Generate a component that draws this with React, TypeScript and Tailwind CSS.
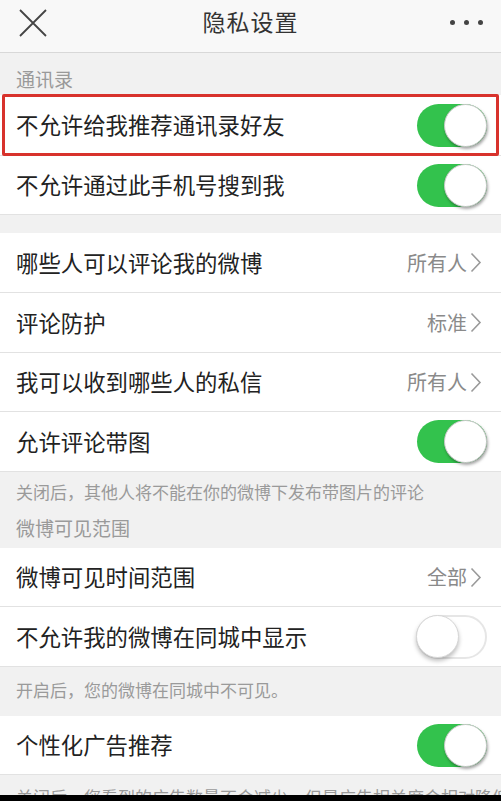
import React from "react";

const font = { fontFamily: '"Noto Sans CJK SC", "Noto Sans", sans-serif' };

const Toggle = ({ on }: { on: boolean }) => {
  return (
    <div
      className={
        on
          ? "w-[70px] h-[43px] rounded-full bg-[#33c24d] flex items-center justify-end"
          : "w-[71px] h-[44px] rounded-full bg-white border-2 border-[#e6e6e6] flex items-center justify-start"
      }
    >
      <div
        className={
          on
            ? "w-[43px] h-[43px] rounded-full bg-white border border-[#c9c9c9] shadow-[1px_2px_3px_rgba(0,0,0,0.35)]"
            : "w-[43px] h-[43px] -ml-[2px] rounded-full bg-white border border-[#d6d6d6] shadow-[0_3px_4px_rgba(0,0,0,0.25)]"
        }
      />
    </div>
  );
};

const Chevron = () => (
  <svg width="12" height="21" viewBox="0 0 12 21" className="ml-[3px]">
    <path d="M1.5 1.5 L10 10.5 L1.5 19.5" fill="none" stroke="#9a9a9a" strokeWidth="1.6" />
  </svg>
);

const ToggleRow = ({ label, on, h = "h-[60px]" }: { label: string; on: boolean; h?: string }) => (
  <div className={`${h} flex items-center justify-between pl-4 pr-[14px] bg-white border-b border-[#e2e2e2]`}>
    <span className="text-[22.4px] text-[#222]">{label}</span>
    <Toggle on={on} />
  </div>
);

const LinkRow = ({ label, value, h = "h-[60px]" }: { label: string; value: string; h?: string }) => (
  <div className={`${h} flex items-center justify-between pl-4 pr-[19px] bg-white border-b border-[#e2e2e2]`}>
    <span className="text-[22.4px] text-[#222]">{label}</span>
    <div className="flex items-center">
      <span className="text-[20px] text-[#8a8a8a]">{value}</span>
      <Chevron />
    </div>
  </div>
);

const App = () => {
  return (
    <div className="w-[501px] h-[801px] overflow-hidden bg-[#f1f1f1]" style={font}>
      {/* Header */}
      <div className="h-[53px] grid grid-cols-[1fr_auto_1fr] items-center pb-[9px] bg-[#f8f8f8] border-b border-[#d8d8d8]">
        <div className="pl-[19px] pt-[2px]">
          <svg width="28" height="28" viewBox="0 0 28 28" className="block">
            <path d="M1 1 L27 27 M27 1 L1 27" stroke="#444" strokeWidth="1.8" fill="none" />
          </svg>
        </div>
        <h1 className="text-[23px] text-[#333] tracking-[1px]">隐私设置</h1>
        <div className="flex justify-end gap-[9px] pr-[18px] pt-[2px]">
          <span className="w-[5px] h-[5px] rounded-full bg-[#444]" />
          <span className="w-[5px] h-[5px] rounded-full bg-[#444]" />
          <span className="w-[5px] h-[5px] rounded-full bg-[#444]" />
        </div>
      </div>

      {/* Contacts */}
      <div className="h-[42px] flex items-center pl-4 pt-[10px] text-[19px] text-[#999]">通讯录</div>
      <div className="relative">
        <ToggleRow label="不允许给我推荐通讯录好友" on h="h-[61px]" />
        <div className="absolute left-[2px] right-[2px] top-[-1px] bottom-0 border-[3px] border-[#d8322c] rounded-[2px]" />
      </div>
      <ToggleRow label="不允许通过此手机号搜到我" on h="h-[59px]" />

      <div className="h-[18px]" />

      <LinkRow label="哪些人可以评论我的微博" value="所有人" />
      <LinkRow label="评论防护" value="标准" />
      <LinkRow label="我可以收到哪些人的私信" value="所有人" h="h-[59px]" />
      <ToggleRow label="允许评论带图" on />

      <div className="h-[76px] pl-4 text-[#9a9a9a]">
        <p className="h-[38px] leading-[40px] text-[17px]">关闭后，其他人将不能在你的微博下发布带图片的评论</p>
        <p className="h-[38px] leading-[36px] text-[19px]">微博可见范围</p>
      </div>

      <LinkRow label="微博可见时间范围" value="全部" h="h-[59px]" />
      <ToggleRow label="不允许我的微博在同城中显示" on={false} />

      <div className="h-[49px] pl-4 leading-[46px] text-[17px] text-[#9a9a9a]">开启后，您的微博在同城中不可见。</div>

      <ToggleRow label="个性化广告推荐" on h="h-[59px]" />

      <div className="h-[20px] overflow-hidden pl-4">
        <p className="whitespace-nowrap leading-[44px] text-[17px] text-[#9a9a9a]">
          关闭后，您看到的广告数量不会减少，但是广告相关度会相对降低
        </p>
      </div>
      <div className="h-[6px] bg-black" />
    </div>
  );
};

export default App;
